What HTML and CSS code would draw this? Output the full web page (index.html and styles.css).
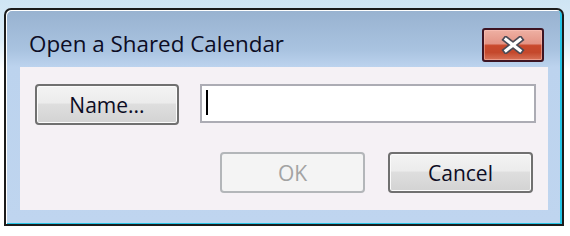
FILE: index.html
```html
<!DOCTYPE html>
<html>
<head>
<meta charset="utf-8">
<link rel="stylesheet" href="styles.css">
</head>
<body>
<div class="window">
  <div class="titlebar">
    <div class="title">Open a Shared Calendar</div>
    <div class="close">
      <svg width="24" height="18" viewBox="0 0 24 18">
        <path d="M5 3.5 L19 14.5 M19 3.5 L5 14.5" stroke="#4a4a55" stroke-width="6.5" stroke-linecap="square" fill="none"/>
        <path d="M5 3.5 L19 14.5 M19 3.5 L5 14.5" stroke="#ffffff" stroke-width="3.2" stroke-linecap="square" fill="none"/>
      </svg>
    </div>
  </div>
  <div class="content">
    <div class="row1">
      <div class="btn name">Name...</div>
      <div class="field"><span class="caret"></span></div>
    </div>
    <div class="row2">
      <div class="btn disabled">OK</div>
      <div class="btn">Cancel</div>
    </div>
  </div>
</div>
</body>
</html>
```
FILE: styles.css
```css
html, body {
  margin: 0;
  padding: 0;
}
body {
  width: 570px;
  height: 236px;
  overflow: hidden;
  background: linear-gradient(#cfe5f4 0px, #dcedf8 40px, #ffffff 70px);
  font-family: "Open Sans", "Noto Sans", sans-serif;
}
.window {
  margin: 8px 0 0 4px;
  width: 560px;
  height: 218px;
  box-sizing: border-box;
  border: 2px solid #1c1c1c;
  border-radius: 7px 7px 0 0;
  background: linear-gradient(#98b2d0 0px, #a9c3e0 40px, #bcd3ee 57px, #bfd5ef 100%);
  box-shadow: inset 1px 1px 0 #ffffff, inset -2px -1px 0 #24c4e6;
  display: flex;
  flex-direction: column;
}
.titlebar {
  height: 57px;
  display: flex;
  align-items: flex-start;
  justify-content: space-between;
  padding-left: 23px;
  flex: none;
}
.title {
  margin-top: 19px;
  font-size: 22.4px;
  line-height: 30px;
  color: #0c0c24;
}
.close {
  margin-top: 18px;
  margin-right: 18px;
  width: 62px;
  height: 34px;
  box-sizing: border-box;
  border: 2px solid #3e1422;
  border-radius: 3px;
  background: linear-gradient(#eeb0a3 0%, #e49485 45%, #c9492c 52%, #c4482c 75%, #d77258 100%);
  box-shadow: inset 0 0 0 1px rgba(255, 200, 190, 0.5);
  display: flex;
  align-items: center;
  justify-content: center;
}
.close svg {
  display: block;
}
.content {
  margin: 0 14px;
  height: 143px;
  background: #f5f1f5;
  padding: 17px 12px 0 15px;
  box-sizing: border-box;
}
.row1 {
  display: flex;
  gap: 21px;
  align-items: flex-start;
}
.btn {
  width: 144px;
  height: 41px;
  box-sizing: border-box;
  border: 2px solid #707070;
  border-radius: 4px;
  background: linear-gradient(#f3f3f3 0%, #ececec 45%, #dedede 50%, #d3d3d3 100%);
  box-shadow: inset 0 0 0 1px #fbfbfb;
  display: flex;
  align-items: center;
  justify-content: center;
  font-size: 21px;
  color: #0c0c24;
}
.field {
  flex: 1;
  height: 39px;
  box-sizing: border-box;
  border: 2px solid #acacb4;
  background: #ffffff;
  padding: 4px 0 0 4px;
}
.caret {
  display: block;
  width: 2px;
  height: 25px;
  background: #000000;
}
.row2 {
  margin-top: 27px;
  margin-right: 3px;
  display: flex;
  justify-content: flex-end;
  gap: 23px;
}
.row2 .btn {
  width: 145px;
}
.btn.disabled {
  border-color: #b3b6b9;
  background: #f4f4f4;
  box-shadow: none;
  color: #a3a3a3;
}
```
